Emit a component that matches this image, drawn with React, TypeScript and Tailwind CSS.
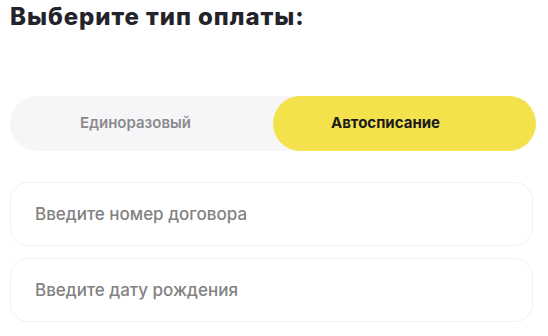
import React from "react";

export default function App() {
  return (
    <div className="w-[548px] h-[336px] bg-white overflow-hidden" style={{ fontFamily: "Inter, 'Noto Sans', sans-serif" }}>
      <h1 className="pl-[10px] pt-[1px] text-[24px] leading-[32px] font-extrabold text-[#23242b] tracking-[0.95px]">
        Выберите тип оплаты:
      </h1>
      <div className="mt-[63px] ml-[10px] mr-[12px] flex h-[55px] rounded-full bg-[#f6f6f8]">
        <div className="flex-1 flex items-center justify-center pr-[12px] rounded-full text-[15px] font-semibold text-[#8a8a8c]">Единоразовый</div>
        <div className="w-[263px] flex items-center justify-center pr-[38px] rounded-full bg-[#f3e24c] text-[15px] font-bold text-[#1b1b1b]">Автосписание</div>
      </div>
      <div className="mt-[31px] ml-[10px] mr-[15px] flex flex-col gap-[12px]">
        <div className="h-[64px] rounded-[18px] border border-[#f1f1f3] flex items-center pl-[24px] pt-[2px] text-[17px] font-medium text-[#828282]">
          Введите номер договора
        </div>
        <div className="h-[64px] rounded-[18px] border border-[#f1f1f3] flex items-center pl-[24px] pt-[2px] text-[17px] font-medium text-[#828282]">
          Введите дату рождения
        </div>
      </div>
    </div>
  );
}
